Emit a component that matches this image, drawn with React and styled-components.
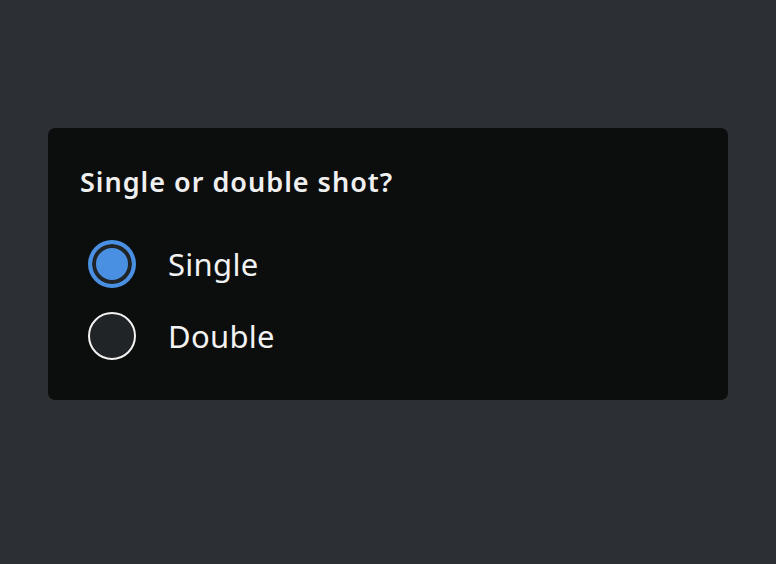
import { useState } from "react";
import styled, { createGlobalStyle } from "styled-components";

const GlobalStyle = createGlobalStyle`
  html, body {
    margin: 0;
    background: #2c2f34;
    font-family: "Noto Sans", "Open Sans", sans-serif;
  }
`;

const Page = styled.div`
  width: 776px;
  height: 564px;
  padding: 128px 48px 0 48px;
  box-sizing: border-box;
`;

const Card = styled.fieldset`
  margin: 0;
  border: none;
  background: #0c0d0d;
  border-radius: 7px;
  padding: 35px 32px 0 32px;
  height: 272px;
  box-sizing: border-box;
`;

const Legend = styled.legend`
  float: left;
  width: 100%;
  padding: 0;
  margin: 0 0 39px 0;
  color: #f0f0f0;
  font-size: 27px;
  font-weight: 600;
  line-height: 38px;
  letter-spacing: 1px;
`;

const Options = styled.div`
  clear: both;
  display: flex;
  flex-direction: column;
  gap: 24px;
`;

const Option = styled.label`
  display: flex;
  align-items: center;
  gap: 32px;
  cursor: pointer;
  color: #f2f2f2;
  font-size: 31px;
  line-height: 48px;
  letter-spacing: 0.3px;
`;

const Radio = styled.input.attrs({ type: "radio" })`
  appearance: none;
  margin: 0 0 0 8px;
  width: 48px;
  height: 48px;
  border-radius: 50%;
  box-sizing: border-box;
  background: #212427;
  border: 2px solid #f2f2f2;
  cursor: pointer;

  &:checked {
    background: #4a90e2;
    border: 4px solid #4a90e2;
    box-shadow: inset 0 0 0 4px #212427;
  }
`;

export default function App() {
  const [shot, setShot] = useState("single");
  return (
    <>
      <GlobalStyle />
      <Page>
        <Card>
          <Legend>Single or double shot?</Legend>
          <Options>
            <Option>
              <Radio
                name="shot"
                checked={shot === "single"}
                onChange={() => setShot("single")}
              />
              Single
            </Option>
            <Option>
              <Radio
                name="shot"
                checked={shot === "double"}
                onChange={() => setShot("double")}
              />
              Double
            </Option>
          </Options>
        </Card>
      </Page>
    </>
  );
}
